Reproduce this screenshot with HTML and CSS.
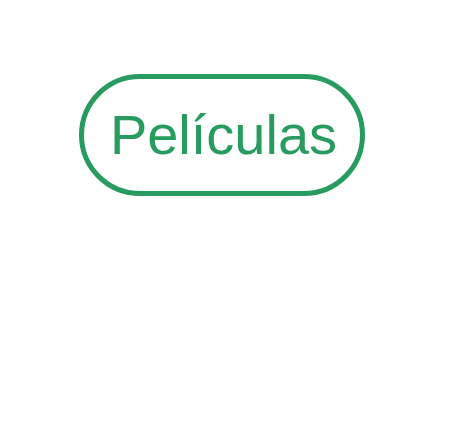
FILE: index.html
```html
<!DOCTYPE html>
<html lang="es">
<head>
<meta charset="utf-8">
<link rel="stylesheet" href="styles.css">
</head>
<body>
<div class="page">
  <button class="pill">Películas</button>
</div>
</body>
</html>
```
FILE: styles.css
```css
html, body {
  margin: 0;
  background: #ffffff;
}
.page {
  padding: 74px 0 0 79px;
}
.pill {
  box-sizing: border-box;
  width: 286px;
  height: 122px;
  border: 5px solid #289b5f;
  border-radius: 61px;
  background: #ffffff;
  color: #289b5f;
  font-family: "Liberation Sans", Arial, sans-serif;
  font-size: 56px;
  line-height: 1;
  display: flex;
  align-items: center;
  justify-content: center;
  padding: 0 0 0 3px;
}
```
